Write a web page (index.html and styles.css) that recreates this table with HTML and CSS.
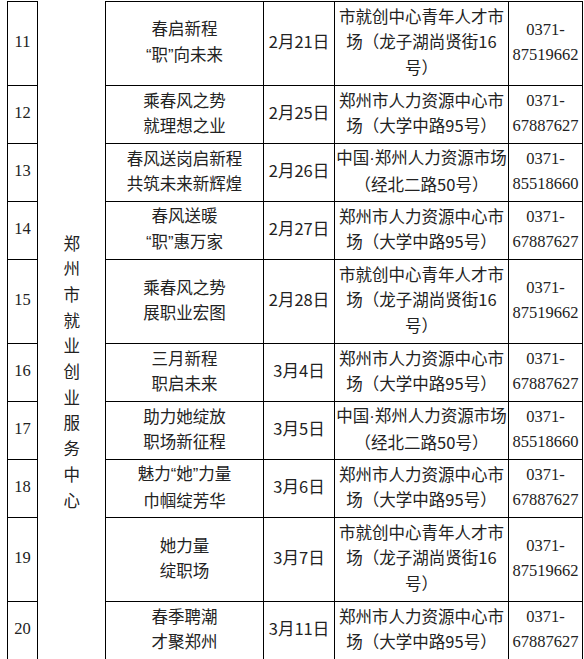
FILE: index.html
```html
<!DOCTYPE html>
<html lang="zh-CN">
<head>
<meta charset="utf-8">
<title>招聘活动安排</title>
<link rel="stylesheet" href="styles.css">
</head>
<body>
<div class="sheet">
  <div class="org"><span class="org-text">郑州市就业创业服务中心</span></div>

  <div class="c num top"><span class="t">11</span></div>
  <div class="c name top"><span class="t">春启新程<br><span class="q">“</span>职<span class="q">”</span>向未来</span></div>
  <div class="c date top"><span class="t">2月21日</span></div>
  <div class="c addr top"><span class="t">市就创中心青年人才市<br>场（龙子湖尚贤街16<br>号）</span></div>
  <div class="c tel top"><span class="t">0371-<br>87519662</span></div>

  <div class="c num"><span class="t">12</span></div>
  <div class="c name"><span class="t">乘春风之势<br>就理想之业</span></div>
  <div class="c date"><span class="t">2月25日</span></div>
  <div class="c addr"><span class="t">郑州市人力资源中心市<br>场（大学中路95号）</span></div>
  <div class="c tel"><span class="t">0371-<br>67887627</span></div>

  <div class="c num"><span class="t">13</span></div>
  <div class="c name"><span class="t">春风送岗启新程<br>共筑未来新辉煌</span></div>
  <div class="c date"><span class="t">2月26日</span></div>
  <div class="c addr"><span class="t">中国<span class="dot">·</span>郑州人力资源市场<br>（经北二路50号）</span></div>
  <div class="c tel"><span class="t">0371-<br>85518660</span></div>

  <div class="c num"><span class="t">14</span></div>
  <div class="c name"><span class="t">春风送暖<br><span class="q">“</span>职<span class="q">”</span>惠万家</span></div>
  <div class="c date"><span class="t">2月27日</span></div>
  <div class="c addr"><span class="t">郑州市人力资源中心市<br>场（大学中路95号）</span></div>
  <div class="c tel"><span class="t">0371-<br>67887627</span></div>

  <div class="c num"><span class="t">15</span></div>
  <div class="c name"><span class="t">乘春风之势<br>展职业宏图</span></div>
  <div class="c date"><span class="t">2月28日</span></div>
  <div class="c addr"><span class="t">市就创中心青年人才市<br>场（龙子湖尚贤街16<br>号）</span></div>
  <div class="c tel"><span class="t">0371-<br>87519662</span></div>

  <div class="c num"><span class="t">16</span></div>
  <div class="c name"><span class="t">三月新程<br>职启未来</span></div>
  <div class="c date"><span class="t">3月4日</span></div>
  <div class="c addr"><span class="t">郑州市人力资源中心市<br>场（大学中路95号）</span></div>
  <div class="c tel"><span class="t">0371-<br>67887627</span></div>

  <div class="c num"><span class="t">17</span></div>
  <div class="c name"><span class="t">助力她绽放<br>职场新征程</span></div>
  <div class="c date"><span class="t">3月5日</span></div>
  <div class="c addr"><span class="t">中国<span class="dot">·</span>郑州人力资源市场<br>（经北二路50号）</span></div>
  <div class="c tel"><span class="t">0371-<br>85518660</span></div>

  <div class="c num"><span class="t">18</span></div>
  <div class="c name"><span class="t">魅力<span class="q">“</span>她<span class="q">”</span>力量<br>巾帼绽芳华</span></div>
  <div class="c date"><span class="t">3月6日</span></div>
  <div class="c addr"><span class="t">郑州市人力资源中心市<br>场（大学中路95号）</span></div>
  <div class="c tel"><span class="t">0371-<br>67887627</span></div>

  <div class="c num"><span class="t">19</span></div>
  <div class="c name"><span class="t">她力量<br>绽职场</span></div>
  <div class="c date"><span class="t">3月7日</span></div>
  <div class="c addr"><span class="t">市就创中心青年人才市<br>场（龙子湖尚贤街16<br>号）</span></div>
  <div class="c tel"><span class="t">0371-<br>87519662</span></div>

  <div class="c num"><span class="t">20</span></div>
  <div class="c name"><span class="t">春季聘潮<br>才聚郑州</span></div>
  <div class="c date"><span class="t">3月11日</span></div>
  <div class="c addr"><span class="t">郑州市人力资源中心市<br>场（大学中路95号）</span></div>
  <div class="c tel"><span class="t">0371-<br>67887627</span></div>
</div>
</body>
</html>
```

FILE: styles.css
```css
html, body {
  margin: 0;
  padding: 0;
  background: #ffffff;
}

body {
  overflow: hidden;
  font-family: "Noto Sans CJK SC", "Microsoft YaHei", sans-serif;
  font-size: 16.5px;
  color: #222222;
}

.sheet {
  display: grid;
  grid-template-columns: 30px 68px 158px 71px 174px 74px;
  grid-template-rows: 85px 58px 58px 58px 84px 58px 58px 58px 84px 58px;
  margin: 1px 0 0 7px;
  width: max-content;
  border-left: 1px solid #000;
}

.c {
  box-sizing: border-box;
  display: flex;
  align-items: center;
  justify-content: center;
  padding-bottom: 3px;
  border-right: 1px solid #000;
  border-bottom: 1px solid #000;
}

.t {
  display: block;
  text-align: center;
  white-space: nowrap;
  line-height: 25.5px;
}

.top {
  border-top: 1px solid #000;
}

.num,
.tel {
  font-family: "Liberation Serif", "Times New Roman", serif;
}

.q,
.dot {
  font-family: "Liberation Sans", Arial, sans-serif;
}

.org {
  grid-column: 2;
  grid-row: 1 / span 10;
  box-sizing: border-box;
  display: flex;
  justify-content: center;
  align-items: flex-start;
  padding-top: 234px;
  border-right: 1px solid #000;
}

.org-text {
  display: block;
  writing-mode: vertical-rl;
  letter-spacing: 9.2px;
  line-height: 1;
}
```
